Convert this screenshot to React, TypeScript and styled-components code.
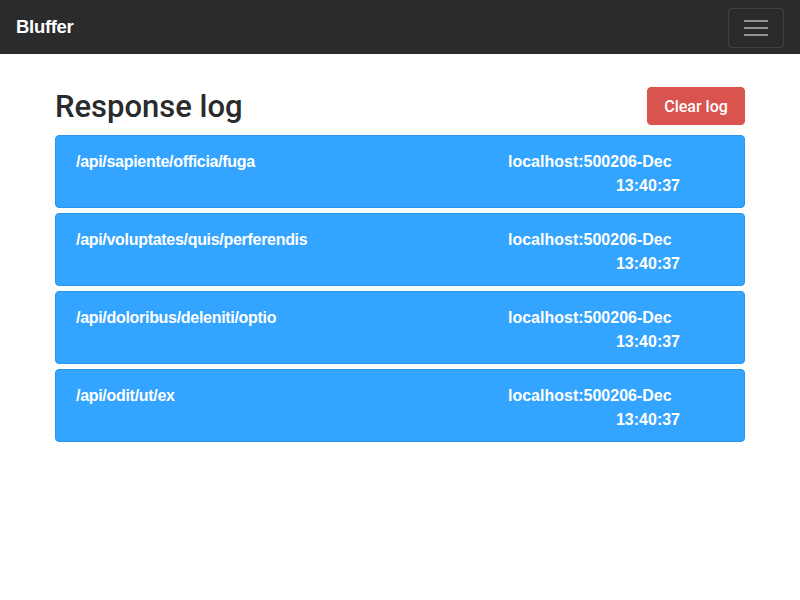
import React from "react";
import styled, { createGlobalStyle } from "styled-components";

const Global = createGlobalStyle`
  html, body { margin: 0; padding: 0; background: #fff; }
  body { font-family: "Liberation Sans", Arial, sans-serif; color: #292b2c; }
  * { box-sizing: border-box; }
`;

const Navbar = styled.nav`
  height: 54px;
  background: #2a2b2d;
  display: flex;
  align-items: center;
  justify-content: space-between;
  padding: 0 16px;
`;

const Brand = styled.a`
  color: #fff;
  font-size: 18.5px;
  font-weight: 700;
  letter-spacing: -0.3px;
  text-decoration: none;
`;

const Toggler = styled.button`
  width: 56px;
  height: 40px;
  margin-top: 1px;
  background: transparent;
  border: 1px solid rgba(255, 255, 255, 0.1);
  border-radius: 4px;
  display: flex;
  align-items: center;
  justify-content: center;
  padding: 0;
`;

const Container = styled.main`
  width: 690px;
  margin: 0 auto;
  padding-top: 33px;
`;

const Header = styled.div`
  display: flex;
  align-items: center;
  justify-content: space-between;
  height: 39px;
  margin-bottom: 9px;
`;

const Title = styled.h1`
  margin: 0;
  font-family: Roboto, "Liberation Sans", sans-serif;
  font-size: 31px;
  font-weight: 500;
  line-height: 1;
  color: #292b2c;
`;

const ClearButton = styled.button`
  width: 98px;
  height: 38px;
  margin-top: -1px;
  background: #d9534f;
  border: 1px solid #d9534f;
  border-radius: 4px;
  color: #fff;
  font-family: Roboto, "Liberation Sans", sans-serif;
  font-size: 16px;
  font-weight: 500;
  padding: 0;
`;

const List = styled.div`
  display: flex;
  flex-direction: column;
  gap: 5px;
`;

const Card = styled.div`
  height: 73px;
  background: #33a4ff;
  border: 1px solid #2a95ec;
  border-radius: 4px;
  padding: 14px 64px 0 20px;
  display: flex;
  justify-content: space-between;
  color: #fff;
  font-size: 16px;
  font-weight: 700;
  line-height: 24px;
`;

const Path = styled.div`
  letter-spacing: -0.3px;
`;

const Meta = styled.div`
  width: 172px;
  display: flex;
  flex-direction: column;
`;

const MetaLine = styled.span<{ $end?: boolean }>`
  align-self: ${(p) => (p.$end ? "flex-end" : "flex-start")};
  white-space: nowrap;
`;

const entries = [
  "/api/sapiente/officia/fuga",
  "/api/voluptates/quis/perferendis",
  "/api/doloribus/deleniti/optio",
  "/api/odit/ut/ex",
];

function MenuIcon() {
  return (
    <svg width="26" height="20" viewBox="0 0 26 20">
      <g stroke="rgba(255,255,255,0.5)" strokeWidth="2">
        <line x1="1" y1="3" x2="25" y2="3" />
        <line x1="1" y1="10" x2="25" y2="10" />
        <line x1="1" y1="17" x2="25" y2="17" />
      </g>
    </svg>
  );
}

export default function App() {
  return (
    <>
      <Global />
      <Navbar>
        <Brand href="#">Bluffer</Brand>
        <Toggler aria-label="Toggle navigation">
          <MenuIcon />
        </Toggler>
      </Navbar>
      <Container>
        <Header>
          <Title>Response log</Title>
          <ClearButton>Clear log</ClearButton>
        </Header>
        <List>
          {entries.map((e) => (
            <Card key={e}>
              <Path>{e}</Path>
              <Meta>
                <MetaLine>localhost:500206-Dec</MetaLine>
                <MetaLine $end>13:40:37</MetaLine>
              </Meta>
            </Card>
          ))}
        </List>
      </Container>
    </>
  );
}
